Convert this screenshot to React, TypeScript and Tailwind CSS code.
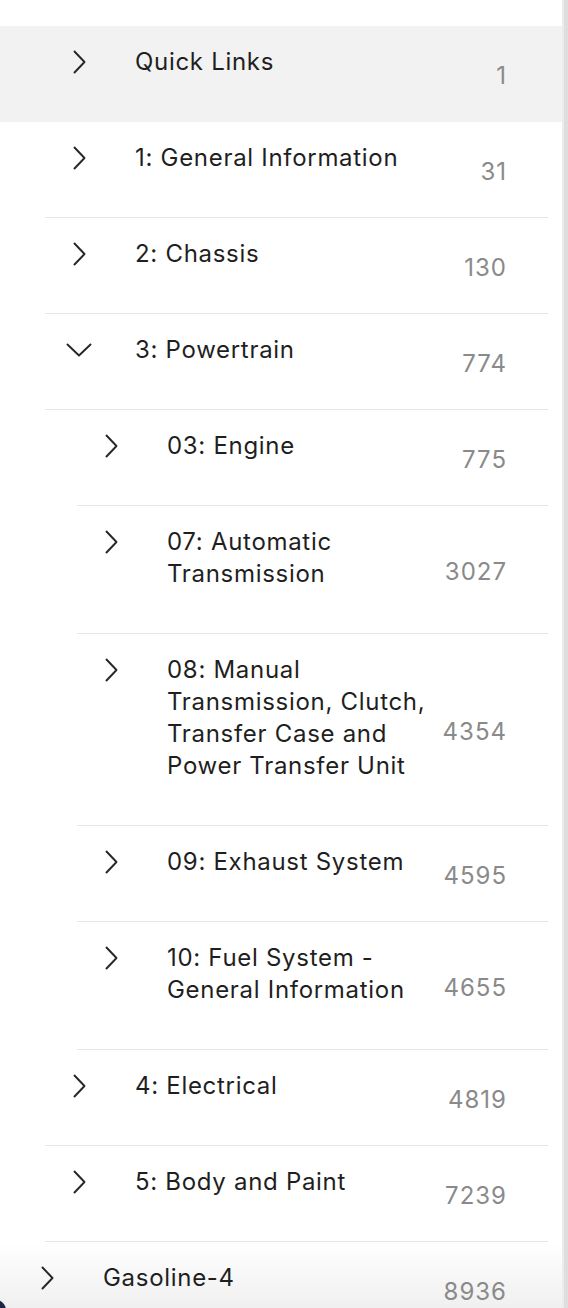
import React from 'react';

type Item = {
  label: string;
  count: number;
  level: number;
  open?: boolean;
  active?: boolean;
  last?: boolean;
};

const items: Item[] = [
  { label: 'Quick Links', count: 1, level: 0, active: true },
  { label: '1: General Information', count: 31, level: 0 },
  { label: '2: Chassis', count: 130, level: 0 },
  { label: '3: Powertrain', count: 774, level: 0, open: true },
  { label: '03: Engine', count: 775, level: 1 },
  { label: '07: Automatic Transmission', count: 3027, level: 1 },
  { label: '08: Manual Transmission, Clutch, Transfer Case and Power Transfer Unit', count: 4354, level: 1 },
  { label: '09: Exhaust System', count: 4595, level: 1 },
  { label: '10: Fuel System - General Information', count: 4655, level: 1 },
  { label: '4: Electrical', count: 4819, level: 0 },
  { label: '5: Body and Paint', count: 7239, level: 0 },
  { label: 'Gasoline-4', count: 8936, level: -1, last: true },
];

const indent: Record<number, string> = {
  [-1]: 'pl-[13px]',
  0: 'pl-[45px]',
  1: 'pl-[77px]',
};

function Chevron({ open }: { open?: boolean }) {
  if (open) {
    return (
      <svg className="shrink-0" width="26" height="14" viewBox="0 0 26 14" fill="none" stroke="#262626" strokeWidth={1.9} strokeLinecap="round" strokeLinejoin="round">
        <path d="M1.5 1.5 L13 12.5 L24.5 1.5" />
      </svg>
    );
  }
  return (
    <svg className="shrink-0" width="13" height="24" viewBox="0 0 13 24" fill="none" stroke="#262626" strokeWidth={1.9} strokeLinecap="round" strokeLinejoin="round">
      <path d="M1.5 1.5 L11.5 12 L1.5 22.5" />
    </svg>
  );
}

function Row({ item }: { item: Item }) {
  const bg = item.active
    ? 'bg-[#f2f2f2]'
    : item.last
    ? 'bg-gradient-to-b from-white to-[#e9e9e9]'
    : 'bg-white';
  const bordered = !(item.active || item.last);
  return (
    <div className={`${bg} ${indent[item.level]}`}>
      <div className={`flex pl-[25px] pr-[43px] mr-[14px] ${bordered ? 'border-b border-[#e6e6e6]' : ''}`}>
        <div className="w-[18px] h-[32px] mt-[20px] flex items-center justify-center shrink-0">
          <Chevron open={item.open} />
        </div>
        <div
          className={`flex-1 ml-[47px] pt-[20px] ${bordered ? 'pb-[43px]' : 'pb-[44px]'} text-[24px] leading-[32px] tracking-[0.7px] text-[#1f1f1f]`}
        >
          {item.label}
        </div>
        <div className="w-[75px] shrink-0 self-center mt-[4px] -mr-[2px] text-right text-[24px] leading-[32px] tracking-[1px] text-[#8a8a8a]">
          {item.count}
        </div>
      </div>
    </div>
  );
}

export default function App() {
  return (
    <div
      className="relative h-[1308px] w-full overflow-hidden bg-white flex"
      style={{ fontFamily: 'Inter, "Noto Sans", sans-serif' }}
    >
      <div className="flex-1 pt-[26px]">
        {items.map((item, idx) => (
          <Row key={idx} item={item} />
        ))}
      </div>
      <div className="w-[6px] h-full flex shrink-0">
        <div className="w-[2px] bg-[#ececec]" />
        <div className="flex-1 bg-[#dedede]" />
      </div>
      <div className="absolute -left-[14px] -bottom-[14px] w-[20px] h-[22px] rounded-full bg-[#1d2748]" />
    </div>
  );
}
